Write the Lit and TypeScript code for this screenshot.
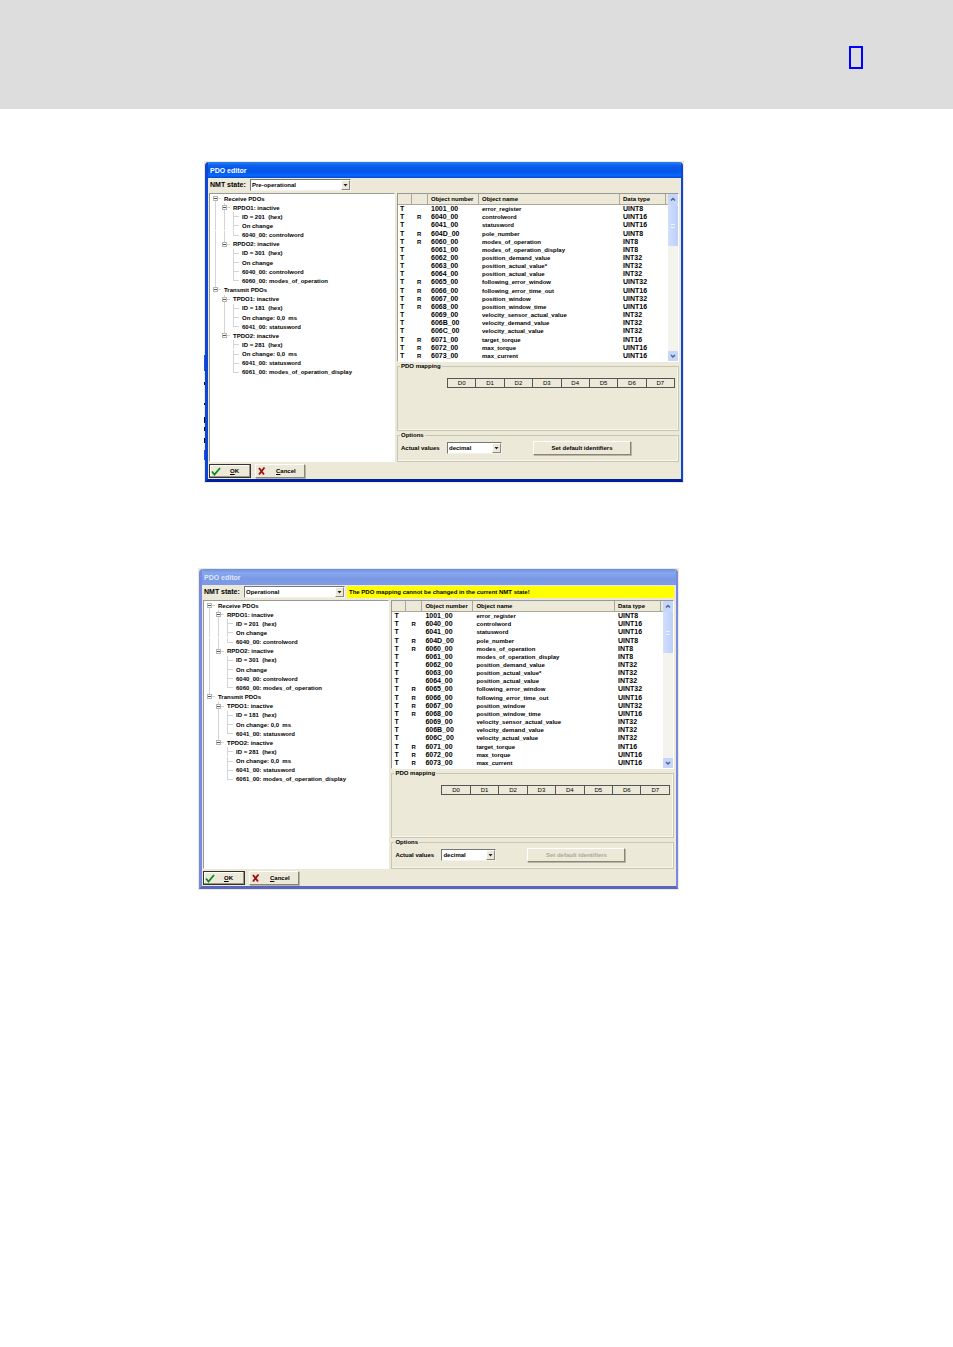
import { LitElement, html, svg, css } from "lit";
import { customElement, property } from "lit/decorators.js";

type TreeRow = { depth: number; text: string; last?: boolean };

const TREE: TreeRow[] = [
  { depth: 0, text: "Receive PDOs" },
  { depth: 1, text: "RPDO1: inactive" },
  { depth: 2, text: "ID = 201  (hex)" },
  { depth: 2, text: "On change" },
  { depth: 2, text: "6040_00: controlword", last: true },
  { depth: 1, text: "RPDO2: inactive", last: true },
  { depth: 2, text: "ID = 301  (hex)" },
  { depth: 2, text: "On change" },
  { depth: 2, text: "6040_00: controlword" },
  { depth: 2, text: "6060_00: modes_of_operation", last: true },
  { depth: 0, text: "Transmit PDOs", last: true },
  { depth: 1, text: "TPDO1: inactive" },
  { depth: 2, text: "ID = 181  (hex)" },
  { depth: 2, text: "On change: 0,0  ms" },
  { depth: 2, text: "6041_00: statusword", last: true },
  { depth: 1, text: "TPDO2: inactive", last: true },
  { depth: 2, text: "ID = 281  (hex)" },
  { depth: 2, text: "On change: 0,0  ms" },
  { depth: 2, text: "6041_00: statusword" },
  { depth: 2, text: "6061_00: modes_of_operation_display", last: true },
];

const OBJECTS: [string, string, string, string][] = [
  ["", "1001_00", "error_register", "UINT8"],
  ["R", "6040_00", "controlword", "UINT16"],
  ["", "6041_00", "statusword", "UINT16"],
  ["R", "604D_00", "pole_number", "UINT8"],
  ["R", "6060_00", "modes_of_operation", "INT8"],
  ["", "6061_00", "modes_of_operation_display", "INT8"],
  ["", "6062_00", "position_demand_value", "INT32"],
  ["", "6063_00", "position_actual_value*", "INT32"],
  ["", "6064_00", "position_actual_value", "INT32"],
  ["R", "6065_00", "following_error_window", "UINT32"],
  ["R", "6066_00", "following_error_time_out", "UINT16"],
  ["R", "6067_00", "position_window", "UINT32"],
  ["R", "6068_00", "position_window_time", "UINT16"],
  ["", "6069_00", "velocity_sensor_actual_value", "INT32"],
  ["", "606B_00", "velocity_demand_value", "INT32"],
  ["", "606C_00", "velocity_actual_value", "INT32"],
  ["R", "6071_00", "target_torque", "INT16"],
  ["R", "6072_00", "max_torque", "UINT16"],
  ["R", "6073_00", "max_current", "UINT16"],
];

@customElement("pdo-editor")
class PdoEditor extends LitElement {
  @property() state = "";
  @property() message = "";
  @property({ type: Boolean, reflect: true }) locked = false;

  static styles = css`
    :host {
      --face: #ece9d8;
      --frame: #0b46d8;
      --frame-dark: #001ea0;
      --title: linear-gradient(#2a80f4 0, #0a5cec 25%, #0556e8 60%, #0868ff 85%, #0348d0 100%);
      --title-text: #fff;
      display: block;
      background: var(--face);
      padding: 1px;
      color: #000;
      font: bold 6px/8px "Liberation Sans", Arial, sans-serif;
    }
    :host([locked]) {
      --frame: #7a8ae0;
      --frame-dark: #5866c0;
      --title: linear-gradient(#6a90e0 0, #86a8ee 25%, #7a98e4 60%, #7c9ae6 100%);
      --title-text: #dfe8fa;
    }
    * { box-sizing: border-box; }
    .window {
      border: solid var(--frame);
      border-width: 0 2px 3px 3px;
      border-radius: 4px 4px 0 0;
      border-bottom-color: var(--frame-dark);
      overflow: hidden;
    }
    .title {
      margin: 0 -2px 0 -3px;
      padding: 5px 5px 3px;
      height: 16px;
      background: var(--title);
      color: var(--title-text);
      font-size: 7px;
    }
    .content { padding: 1px 2px 1px 1px; }
    .toolbar { display: flex; align-items: center; height: 12px; padding-left: 1px; margin-bottom: 2px; }
    .toolbar label { width: 40px; font-size: 7px; }
    .message { flex: 1; margin-left: 2px; height: 12px; padding: 2px; background: #ff0; }
    .combo {
      display: flex;
      height: 12px;
      border: 1px solid;
      border-color: #777 #f4f2e8 #f4f2e8 #777;
      background: #fff;
    }
    .combo.state { width: 101px; }
    .combo.values { width: 55px; }
    select {
      flex: 1;
      min-width: 0;
      appearance: none;
      border: 0;
      padding: 0 1px;
      margin: 0;
      background: none;
      color: inherit;
      font: inherit;
      outline: 0;
    }
    .arrow { width: 9px; height: 10px; background: var(--face); border: 1px solid; border-color: #fff #888 #888 #fff; }
    .panels { display: grid; grid-template-columns: 186fr 282fr; gap: 2px; height: 269px; }
    .tree {
      padding: 0 0 0 3px;
      background: #fff;
      border: 1px solid;
      border-color: #999 #fff #fff #999;
    }
    .rows { display: grid; grid-auto-rows: 1fr; height: 183px; margin: 0; padding: 0; list-style: none; }
    .rows li { display: flex; align-items: stretch; white-space: pre; }
    .rows span { align-self: center; }
    .rows svg { flex: none; height: 100%; margin-right: 1px; }
    .right { display: flex; flex-direction: column; min-width: 0; }
    .list { display: flex; height: 169px; background: #fff; border: 1px solid; border-color: #999 #fff #fff #999; }
    .list table { width: calc(100% - 10px); height: 166px; border-collapse: separate; border-spacing: 0; table-layout: fixed; }
    th, td { padding: 0; font: inherit; text-align: left; white-space: nowrap; overflow: visible; }
    .list th { height: 11px; padding-left: 3px; background: var(--face); border: solid; border-width: 0 1px 1px 0; border-color: #aca899; }
    .list td { height: 8px; line-height: 8px; padding-left: 3px; }
    .list td:first-child { padding-left: 2px; }
    .list td:nth-child(2) { padding-left: 5px; }
    .list td:nth-child(odd) { font-size: 7px; }
    .c1 { width: 14px; }
    .c2 { width: 16px; }
    .c3 { width: 51px; }
    .c5 { width: 46px; }
    .list .c6 { width: 2px; padding: 0; border-right: 0; }
    .scroll { width: 10px; display: flex; flex-direction: column; background: #f4f3ee; }
    .scroll svg { display: block; background: #c6d6fb; border-radius: 1px; }
    .thumb { height: 41px; background: linear-gradient(90deg, #d2dffc, #bccffa); border-radius: 1px; display: grid; place-items: center; }
    .thumb i { width: 4px; height: 4px; border: solid #eef3ff; border-width: 1px 0; }
    .gap { flex: 1; }
    fieldset { min-width: 0; margin: 0; padding: 0; border: 1px solid #c8c5b2; box-shadow: inset -1px -1px 0 #f8f7f0; }
    legend { height: 8px; margin-left: 2px; padding: 0 1px; }
    .mapping { flex: 1; }
    .bytes { width: calc(100% - 52px); margin: 8px 3px 0 auto; border-collapse: collapse; table-layout: fixed; font-weight: normal; }
    .bytes td { height: 9px; border: 1px solid #555; text-align: center; }
    .options { height: 31px; }
    .fields { display: flex; align-items: center; padding: 2px 3px 0; }
    .fields label { width: 46px; }
    button {
      display: flex;
      align-items: center;
      justify-content: center;
      height: 14px;
      padding: 0;
      background: var(--face);
      border: 1px solid;
      border-color: #fff #8a8778 #8a8778 #fff;
      box-shadow: 1px 1px 0 #b8b5a4;
      color: inherit;
      font: inherit;
    }
    button:disabled { color: #aca899; }
    .defaults { width: 98px; margin-left: 31px; }
    .actions { display: flex; gap: 4px; margin-top: 2px; }
    .actions button { justify-content: flex-start; }
    .actions svg { margin: 0 9px 0 1px; }
    .ok { width: 42px; border-color: #333; box-shadow: inset -1px -1px 0 #9a9786, inset 1px 1px 0 #fff; }
    .cancel { width: 50px; }
  `;

  private guides(row: TreeRow, index: number) {
    const width = [10, 19, 28][row.depth];
    const x = [2, 11, 20][row.depth];
    const showRoot = row.depth > 0 && index < 10;
    const showBranch = row.depth === 2 && (index < 5 || (index > 11 && index < 15));
    const line = "#d4d4d4";
    return svg`<svg width=${width} viewBox="0 0 ${width} 9" shape-rendering="crispEdges" aria-hidden="true">
      ${showRoot ? svg`<path d="M2.5 0V9" stroke=${line} />` : ""}
      ${showBranch ? svg`<path d="M11.5 0V9" stroke=${line} />` : ""}
      <path d=${`M${x + 0.5} ${index === 0 ? 4 : 0}V${row.last ? 5 : 9}M${x} 4.5H${x + 6}`} fill="none" stroke=${line} />
      ${row.depth < 2
        ? svg`<rect x=${x - 1.5} y="2.5" width="4" height="4" fill="#fff" stroke="#b4b4b4" /><path d=${`M${x - 1} 4.5h3`} stroke="#555" />`
        : ""}
    </svg>`;
  }

  private arrow() {
    return html`<svg class="arrow" viewBox="0 0 7 8" aria-hidden="true"><path d="M1.500 3H5.500L3.500 5.500Z" fill="#222" /></svg>`;
  }

  render() {
    return html`
      <section class="window" aria-label="PDO editor">
        <div class="title">PDO editor</div>
        <div class="content">
          <div class="toolbar">
            <label for="state">NMT state:</label>
            <div class="combo state">
              <select id="state"><option>${this.state}</option></select>${this.arrow()}
            </div>
            ${this.message ? html`<div class="message" role="status">${this.message}</div>` : ""}
          </div>
          <div class="panels">
            <div class="tree">
              <ul class="rows">
                ${TREE.map((row, i) => html`<li>${this.guides(row, i)}<span>${row.text}</span></li>`)}
              </ul>
            </div>
            <div class="right">
              <div class="list">
                <table>
                  <thead>
                    <tr>
                      <th class="c1"></th><th class="c2"></th><th class="c3">Object number</th>
                      <th>Object name</th><th class="c5">Data type</th><th class="c6"></th>
                    </tr>
                  </thead>
                  <tbody>
                    ${OBJECTS.map(([r, id, name, type]) => html`<tr>
                      <td>T</td><td>${r}</td><td>${id}</td><td>${name}</td><td>${type}</td><td></td>
                    </tr>`)}
                  </tbody>
                </table>
                <div class="scroll" aria-hidden="true">
                  <svg width="10" height="11"><path d="M3 6.500L5 4.500L7 6.500" fill="none" stroke="#4d6185" stroke-width="1.400" /></svg>
                  <div class="thumb"><i></i></div>
                  <div class="gap"></div>
                  <svg width="10" height="10"><path d="M3 4L5 6L7 4" fill="none" stroke="#4d6185" stroke-width="1.400" /></svg>
                </div>
              </div>
              <fieldset class="mapping">
                <legend>PDO mapping</legend>
                <table class="bytes">
                  <tbody><tr>${[0, 1, 2, 3, 4, 5, 6, 7].map((n) => html`<td>D${n}</td>`)}</tr></tbody>
                </table>
              </fieldset>
              <fieldset class="options">
                <legend>Options</legend>
                <div class="fields">
                  <label for="values">Actual values</label>
                  <div class="combo values">
                    <select id="values"><option>decimal</option></select>${this.arrow()}
                  </div>
                  <button class="defaults" ?disabled=${this.locked}>Set default identifiers</button>
                </div>
              </fieldset>
            </div>
          </div>
          <div class="actions">
            <button class="ok">
              <svg width="10" height="10" viewBox="0 0 10 10" aria-hidden="true"><path d="M1 5.500L3.500 8.500L9 2" fill="none" stroke="#0a8a1c" stroke-width="1.800" /></svg>
              <span><u>O</u>K</span>
            </button>
            <button class="cancel">
              <svg width="10" height="10" viewBox="0 0 10 10" aria-hidden="true"><path d="M2 2L7 8.500M7.500 1.500L2 8.500" fill="none" stroke="#a01010" stroke-width="1.900" /></svg>
              <span><u>C</u>ancel</span>
            </button>
          </div>
        </div>
      </section>
    `;
  }
}

@customElement("app-root")
class AppRoot extends LitElement {
  static styles = css`
    :host { display: block; min-height: 100vh; background: #fff; }
    * { box-sizing: border-box; }
    header { display: flex; justify-content: flex-end; height: 109px; padding: 46px 90px 0 0; background: #ddd; }
    .mark { width: 14px; height: 23px; border: 2px solid #00f; }
    main { padding: 52px 269px 0 204px; }
    .first { position: relative; }
    .edge { position: absolute; left: 0; top: 194px; }
    .second { margin: 85px 5px 0 -6px; }
  `;

  render() {
    return html`
      <header><a class="mark" href="#top" aria-label="Top"></a></header>
      <main>
        <div class="first">
          <pdo-editor state="Pre-operational"></pdo-editor>
          <svg class="edge" width="1" height="106" aria-hidden="true">
            <path d="M.5 0V16M.5 95V105" stroke="#2050d8" />
            <path d="M.5 27V30M.5 48V50M.5 62V68M.5 72V76M.5 83V88" stroke="#111" />
          </svg>
        </div>
        <div class="second">
          <pdo-editor
            state="Operational"
            locked
            message="The PDO mapping cannot be changed in the current NMT state!"
          ></pdo-editor>
        </div>
      </main>
    `;
  }
}
